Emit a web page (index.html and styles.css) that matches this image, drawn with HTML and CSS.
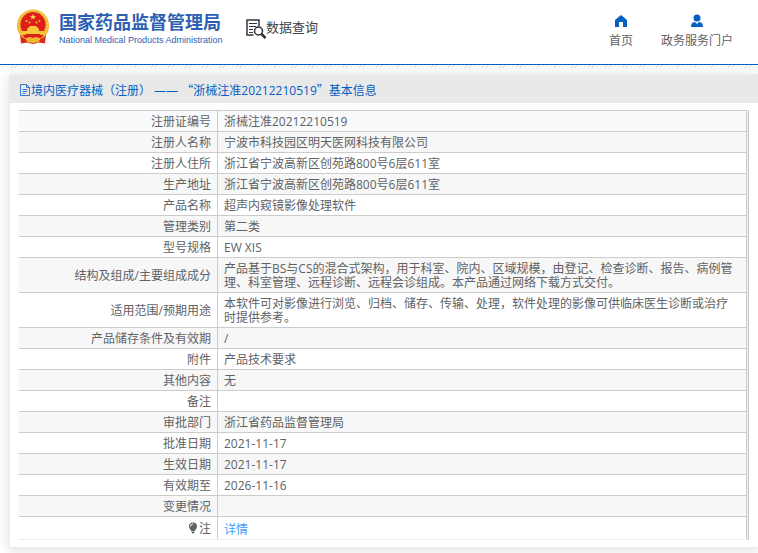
FILE: index.html
```html
<!DOCTYPE html>
<html lang="zh-CN">
<head>
  <meta charset="UTF-8">
  <title>国家药品监督管理局数据查询</title>
  <meta name="viewport" content="width=device-width, initial-scale=1.0">
  <link rel="stylesheet" href="styles.css">
</head>
<body>
<header class="header">
  <a class="logo" href="#">
    <svg class="emblem" viewBox="0 0 34 36" aria-hidden="true">
      <path d="M4 25 L5 34.500 L11 33.500 L17 35 L23 33.500 L29 34.500 L30 25Z" fill="#d92a1c"/>
      <circle cx="17" cy="16.500" r="16" fill="#efb32e"/>
      <circle cx="17" cy="16.500" r="14.500" fill="none" stroke="#f6ce4c" stroke-width="1.500" stroke-dasharray="2 1"/>
      <circle cx="17" cy="15.500" r="12.500" fill="#dc1f18"/>
      <path d="M17 5l.9 2h2.100l-1.700 1.400.7 2.100-2-1.300-2 1.300.7-2.100L14 7h2.100z" fill="#f8d348"/>
      <g fill="#f3c23c"><circle cx="10.500" cy="12" r="1"/><circle cx="13.500" cy="13.500" r="1"/><circle cx="20.500" cy="13.500" r="1"/><circle cx="23.500" cy="12" r="1"/></g>
      <path d="M12.500 18.500L14 17h6l1.500 1.500L23 20v2h5v3H6v-3h5v-2z" fill="#f6c63b"/>
      <path d="M6 26h22l-3 3H9z" fill="#dc1f18"/>
      <path d="M10 29l4-1 3 1 3-1 4 1-1 4-6 1-6-1z" fill="#f1b62f"/>
      <path d="M5 28l5 2v3l-4 1zM29 28l-5 2v3l4 1z" fill="#d92a1c"/>
    </svg>
    <span class="logo-text">
      <span class="logo-cn">国家药品监督管理局</span>
      <span class="logo-en">National Medical Products Administration</span>
    </span>
  </a>
  <a class="query" href="#">
    <svg class="query-icon" viewBox="0 0 20 20" aria-hidden="true">
      <path d="M7.500 16H1V1h12v6" fill="none" stroke="#34343e" stroke-width="1.500"/>
      <path d="M3 4.500h8M3 7.500h7M3 10.500h4M3 13.500h4" stroke="#34343e" stroke-width="1"/>
      <circle cx="12.500" cy="12" r="4" fill="#fff" stroke="#2b2b3c" stroke-width="1.500"/>
      <path d="M15.500 15l4 4" stroke="#2b2b3c" stroke-width="2.500"/>
    </svg>
    <span>数据查询</span>
  </a>
  <nav class="nav">
    <a href="#">
      <svg viewBox="0 0 14 14" aria-hidden="true"><path d="M7 1l6 5v7H9V8H5v5H1V6z" fill="#0560c4"/></svg>
      <span>首页</span>
    </a>
    <a href="#">
      <svg viewBox="0 0 14 14" aria-hidden="true"><circle cx="7" cy="4" r="3.500" fill="#0560c4"/><path d="M1 13c0-3 1-4.500 4-5l2 2 2-2c3 .5 4 2 4 5z" fill="#0560c4"/></svg>
      <span>政务服务门户</span>
    </a>
  </nav>
</header>

<main class="card">
  <h1 class="card-header">
    <svg viewBox="0 0 12 12" aria-hidden="true"><path d="M1.500 .5h6l3 3v8h-9zM7.500 .5v3h3M3.500 5.500h5M3.500 7.500h5M3.500 9.500h3" fill="none" stroke="#0560c4" stroke-opacity=".8"/></svg>
    <span>境内医疗器械（注册） —— <span class="wide">“</span>浙械注准20212210519<span class="wide">”</span>基本信息</span>
  </h1>
  <div class="card-body">
    <div class="table-wrap">
      <table class="info">
        <tbody>
          <tr class="current"><th scope="row">注册证编号</th><td>浙械注准20212210519</td></tr>
          <tr><th scope="row">注册人名称</th><td>宁波市科技园区明天医网科技有限公司</td></tr>
          <tr><th scope="row">注册人住所</th><td>浙江省宁波高新区创苑路800号6层611室</td></tr>
          <tr><th scope="row">生产地址</th><td>浙江省宁波高新区创苑路800号6层611室</td></tr>
          <tr><th scope="row">产品名称</th><td>超声内窥镜影像处理软件</td></tr>
          <tr><th scope="row">管理类别</th><td>第二类</td></tr>
          <tr><th scope="row">型号规格</th><td>EW XIS</td></tr>
          <tr><th scope="row">结构及组成/主要组成成分</th><td>产品基于BS与CS的混合式架构，用于科室、院内、区域规模，由登记、检查诊断、报告、病例管理、科室管理、远程诊断、远程会诊组成。本产品通过网络下载方式交付。</td></tr>
          <tr><th scope="row">适用范围/预期用途</th><td>本软件可对影像进行浏览、归档、储存、传输、处理，软件处理的影像可供临床医生诊断或治疗时提供参考。</td></tr>
          <tr><th scope="row">产品储存条件及有效期</th><td>/</td></tr>
          <tr><th scope="row">附件</th><td>产品技术要求</td></tr>
          <tr><th scope="row">其他内容</th><td>无</td></tr>
          <tr><th scope="row">备注</th><td></td></tr>
          <tr><th scope="row">审批部门</th><td>浙江省药品监督管理局</td></tr>
          <tr><th scope="row">批准日期</th><td>2021-11-17</td></tr>
          <tr><th scope="row">生效日期</th><td>2021-11-17</td></tr>
          <tr><th scope="row">有效期至</th><td>2026-11-16</td></tr>
          <tr><th scope="row">变更情况</th><td></td></tr>
          <tr class="note">
            <th scope="row">
              <svg viewBox="0 0 10 12" aria-hidden="true"><path d="M5 .5a4 4 0 0 1 4 4c0 2-1.500 2.500-2 4.500H3C2.500 7 1 6.500 1 4.500a4 4 0 0 1 4-4zM3.500 9.500h3L6 11.500H4z" fill="#606266"/><path d="M2.500 4.500A2.500 2.500 0 0 1 5 2" fill="none" stroke="#fff"/></svg>注
            </th>
            <td><a href="#">详情</a></td>
          </tr>
        </tbody>
      </table>
    </div>
  </div>
</main>
</body>
</html>
```
FILE: styles.css
```css
* {
  box-sizing: border-box;
}

body {
  min-height: 100vh;
  margin: 0;
  background: #fff;
  color: #606266;
  font-family: "Open Sans", "Noto Sans CJK SC", sans-serif;
  font-size: 12px;
  line-height: 14px;
}

a {
  color: inherit;
  text-decoration: none;
}

svg {
  display: block;
  flex: none;
}

/* header */
.header {
  display: flex;
  align-items: flex-start;
  height: 65px;
  padding: 0 25px 0 16px;
  border-bottom: 1px solid #0560c4;
}

/* hatched strip under the header */
.header + .card::before {
  content: "";
  position: absolute;
  top: 65px;
  left: 0;
  right: 0;
  height: 3px;
  background: repeating-linear-gradient(135deg, #e2e2e2 0 1px, #fff 1px 3px);
}

.logo {
  display: flex;
  gap: 9px;
  padding-top: 9px;
  color: #2d5fb3;
}

.emblem {
  width: 34px;
  height: 36px;
}

.logo-text {
  display: flex;
  flex-direction: column;
  width: 162px;
  white-space: nowrap;
}

.logo-cn {
  font-size: 18px;
  font-weight: bold;
  line-height: 26px;
}

.logo-en {
  font-family: "Liberation Sans", Arial, sans-serif;
  font-size: 9px;
  line-height: 10px;
}

.query {
  display: flex;
  align-items: flex-start;
  margin-left: 25px;
  padding-top: 19px;
  color: #444;
  font-size: 13px;
  line-height: 16px;
}

.query-icon {
  width: 20px;
  height: 20px;
}

.nav {
  display: flex;
  gap: 28px;
  margin-left: auto;
  padding-top: 14px;
}

.nav a {
  display: flex;
  flex-direction: column;
  align-items: center;
  gap: 6px;
}

.nav svg {
  width: 14px;
  height: 14px;
}

/* card */
.card {
  margin: 9px 0 0 9px;
  border: 1px solid #ebeef5;
  border-right: 0;
  box-shadow: 0 2px 12px rgba(0, 0, 0, 0.14);
}

.card-header {
  display: flex;
  align-items: center;
  height: 28px;
  margin: 0;
  padding: 2px 9px 0;
  background: #e9e9e9;
  color: #0560c4;
  font-size: 12px;
  font-weight: normal;
}

.card-header svg {
  width: 12px;
  height: 12px;
}

/* full-width quotes */
.wide {
  font-family: "Noto Sans CJK SC", sans-serif;
}

.card-body {
  padding: 7px 9px;
}

.table-wrap {
  padding-right: 1px;
  border-right: 1px solid #ccc;
  background: #ebeef5;
}

.info {
  width: 100%;
  border-collapse: separate;
  border-spacing: 0;
  border-bottom: 1px solid #ebeef5;
  background: #fff;
}

.info th,
.info td {
  padding: 4px 6px 2px;
  border-top: 1px solid #ccc;
  border-right: 1px solid #ccc;
  font-weight: normal;
  text-align: left;
  vertical-align: middle;
}

.info th {
  width: 199px;
  text-align: right;
}

.info td {
  height: 21px;
  padding-right: 12px;
}

.info tr:nth-child(even) {
  background: #f7f7f7;
}

.info .current {
  background: #f8fafc;
}

.info .note td {
  height: 23px;
  padding-top: 6px;
}

.note a {
  color: #409eff;
}

.note svg {
  display: inline-block;
  width: 10px;
  height: 12px;
  margin-right: 1px;
  vertical-align: -1px;
}
```
